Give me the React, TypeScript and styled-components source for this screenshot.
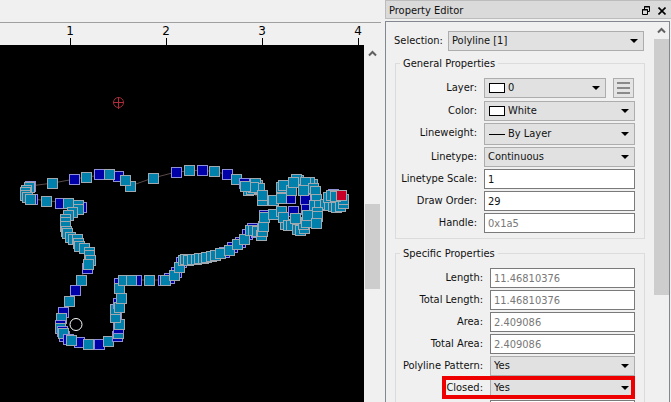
import React from "react";
import styled, { createGlobalStyle, css } from "styled-components";

const GlobalStyle = createGlobalStyle`
  * { box-sizing: border-box; }
  body { margin: 0; background: #f0f0f0; }
  body, input, select, button {
    font-family: "DejaVu Sans Condensed", Tahoma, "DejaVu Sans", sans-serif;
    font-size: 11px;
    line-height: 14px;
    color: #111;
  }
`;

const Window = styled.div`
  display: grid;
  grid-template-columns: minmax(0, 1fr) 286px;
  column-gap: 4px;
  height: 100vh;
  overflow: hidden;
`;

/* ---------- drawing area ---------- */

const DrawingArea = styled.main`
  display: flex;
  flex-direction: column;
  min-height: 0;
`;

const ToolbarGap = styled.div`
  height: 23px;
  border-bottom: 1px solid #a0a0a0;
  flex: none;
`;

const Ruler = styled.div`
  display: flex;
  height: 22px;
  padding-left: 22px;
  overflow: hidden;
  flex: none;
`;

const RulerMark = styled.div`
  display: flex;
  flex-direction: column;
  align-items: center;
  justify-content: space-between;
  flex: 0 0 96px;
  padding-top: 1px;
  font-family: "DejaVu Sans", Verdana, sans-serif;
  font-size: 12px;
  color: #000;

  &::after {
    content: "";
    width: 1px;
    height: 7px;
    background: #000;
  }
`;

const Viewport = styled.div`
  display: flex;
  flex: 1;
  min-height: 0;
`;

const Canvas = styled.div`
  flex: 1;
  min-width: 0;
  background: #000;
  overflow: hidden;

  svg { display: block; }
`;

const ScrollTrack = styled.div<{ $wide?: boolean }>`
  display: flex;
  flex-direction: column;
  align-items: center;
  flex: none;
  width: ${(p) => (p.$wide ? 17 : 15)}px;
  background: #f0f0f0;
`;

const ScrollButton = styled.button<{ $gap: number }>`
  display: grid;
  place-items: center;
  width: 15px;
  height: 17px;
  margin-bottom: ${(p) => p.$gap}px;
  padding: 0;
  border: 0;
  background: transparent;
  flex: none;
`;

const ScrollThumb = styled.div<{ $length: number }>`
  width: 15px;
  height: ${(p) => p.$length}px;
  background: #cdcdcd;
  flex: none;
`;

const ChevronUp = () => (
  <svg width="9" height="7" viewBox="0 0 9 7" aria-hidden="true">
    <path d="M1 5.5 4.5 2 8 5.5" fill="none" stroke="#606060" strokeWidth="2" />
  </svg>
);

type Node = [number, number, 0 | 1];

const nodes: Node[] = [
  [30, 186, 1], [29, 187, 0], [26, 190, 0], [25, 192, 0], [25, 195, 0], [27, 197, 0],
  [32, 199, 1], [30, 199, 0], [46, 201, 0], [60, 203, 1], [68, 203, 0],
  [81, 207, 1], [78, 205, 0], [78, 209, 0], [72, 212, 0], [68, 215, 0], [65, 219, 0],
  [65, 222, 0], [65, 226, 0], [66, 231, 0], [67, 233, 0], [70, 237, 0], [73, 239, 0],
  [77, 239, 0], [78, 243, 0], [79, 246, 0], [84, 248, 0], [89, 252, 0], [89, 255, 0],
  [90, 260, 0], [87, 268, 1], [88, 264, 0], [81, 280, 0], [75, 290, 1], [69, 301, 0], [63, 312, 1],
  [61, 318, 0], [60, 325, 1], [60, 328, 0], [62, 331, 1], [64, 336, 1], [63, 333, 0],
  [68, 339, 1], [79, 342, 1], [71, 340, 0], [99, 344, 1], [88, 344, 0], [108, 341, 0],
  [117, 336, 1], [118, 333, 0], [118, 328, 1], [119, 324, 0], [116, 314, 1], [115, 317, 0],
  [115, 309, 0], [118, 303, 1], [119, 307, 0], [121, 298, 0], [119, 283, 1], [119, 288, 0],
  [136, 280, 1], [123, 280, 0], [131, 280, 0], [149, 280, 0], [163, 280, 1], [169, 278, 1],
  [165, 280, 0], [176, 272, 1], [174, 275, 0], [181, 262, 1], [179, 267, 0], [183, 260, 0],
  [185, 259, 0], [188, 260, 0], [192, 259, 0], [196, 259, 0], [199, 258, 0], [203, 258, 0],
  [206, 257, 0], [211, 256, 0], [215, 255, 0], [224, 252, 1], [220, 253, 0], [232, 247, 1],
  [229, 250, 0], [240, 242, 1], [237, 244, 0], [247, 234, 1], [244, 239, 0], [252, 228, 1],
  [250, 230, 0], [256, 232, 1], [253, 230, 0], [257, 231, 0], [261, 235, 0], [262, 231, 0],
  [263, 226, 0], [264, 215, 1], [264, 217, 0], [273, 214, 0],
  [118, 176, 1], [130, 186, 0], [125, 180, 0], [99, 174, 1], [109, 174, 0],
  [86, 177, 0], [74, 179, 1], [52, 183, 0],
  [153, 178, 0], [176, 172, 1], [189, 170, 0], [202, 170, 1], [214, 171, 0], [227, 174, 1],
  [236, 179, 0], [244, 183, 1], [248, 190, 0], [251, 189, 0], [257, 185, 0], [255, 183, 0],
  [259, 188, 0], [253, 187, 0], [245, 186, 0], [262, 200, 0], [262, 195, 0],
  [290, 198, 1], [305, 199, 1], [293, 211, 1], [306, 209, 1],
  [273, 200, 0], [281, 192, 0], [281, 198, 0], [281, 187, 0], [283, 185, 0],
  [291, 190, 0], [298, 180, 0], [296, 179, 0], [293, 182, 0], [312, 184, 0], [309, 182, 0],
  [305, 182, 0], [313, 188, 0], [315, 191, 0], [303, 190, 0],
  [316, 199, 0], [314, 205, 0], [319, 205, 0], [325, 204, 0],
  [281, 211, 0], [285, 224, 0], [283, 217, 0], [288, 225, 0], [291, 225, 0], [297, 229, 0],
  [300, 230, 0], [304, 228, 0], [303, 224, 0], [306, 222, 0], [295, 218, 0], [307, 215, 0],
  [317, 212, 0], [317, 216, 0], [316, 223, 0],
  [329, 205, 0], [333, 206, 0], [336, 207, 0], [340, 206, 0], [343, 203, 0], [343, 199, 0],
  [328, 197, 0], [333, 194, 1], [331, 195, 0], [335, 196, 0],
];

const Drawing = () => (
  <svg width="364" height="357" viewBox="0 45 364 357" role="img" aria-label="Closed polyline with node handles">
    <path
      d="M30 186 53 183 75 179 87 177 109 174 119 176 130 186 153 178 176 172 202 170 227 174 262 200M32 199 68 203M88 264 61 318M123 280 166 280"
      fill="none" stroke="#5a4a4a"
    />
    {nodes.map(([x, y, mid], i) => (
      <rect
        key={i} x={x - 4.5} y={y - 4.5} width="10" height="10"
        fill={mid ? "#0000a8" : "#0080aa"} stroke={mid ? "#9090d8" : "#a0a8b0"}
      />
    ))}
    <rect x="336.5" y="190.5" width="10" height="10" fill="#c80028" stroke="#a0a8b0" />
    <path d="M118.500 97v12M113 102.500h11" stroke="#b02c3c" fill="none" />
    <circle cx="118.500" cy="102.500" r="5" fill="none" stroke="#a02c38" />
    <circle cx="76" cy="324.500" r="6" fill="none" stroke="#fff" />
  </svg>
);

/* ---------- property editor ---------- */

const Dock = styled.aside`
  display: flex;
  flex-direction: column;
  min-height: 0;
`;

const DockTitle = styled.header`
  display: flex;
  align-items: center;
  gap: 8px;
  height: 19px;
  padding: 2px 5px 0 3px;
  background: #dadada;
  border: solid #bcbcbc;
  border-width: 1px 0 1px 1px;
  flex: none;
  margin-bottom: 2px;
`;

const DockName = styled.h1`
  flex: 1;
  margin: 0;
  font-size: 11px;
  font-weight: 400;
`;

const TitleButton = styled.button`
  display: grid;
  place-items: center;
  width: 8px;
  height: 10px;
  padding: 0;
  border: 0;
  background: transparent;
`;

const DockBody = styled.div`
  display: flex;
  flex: 1;
  min-height: 0;
  margin-right: 1px;
  border: solid #828790;
  border-width: 1px 1px 0 1px;
  overflow: hidden;
`;

const Form = styled.form`
  flex: 1;
  min-width: 0;
  padding: 9px 9px 0 8px;
`;

const SelectionRow = styled.div`
  display: grid;
  grid-template-columns: 47px minmax(0, 1fr);
  column-gap: 7px;
  align-items: center;
  padding-right: 1px;
  margin-bottom: 12px;
`;

const Group = styled.fieldset<{ $labels: number }>`
  --labels: ${(p) => p.$labels}px;
  display: flex;
  flex-direction: column;
  gap: 2px;
  min-width: 0;
  margin: 0 0 14px 1px;
  padding: 14px 9px 5px 0;
  border: 1px solid #dcdcdc;
  position: relative;
`;

const GroupTitle = styled.legend`
  position: absolute;
  top: -7px;
  left: 4px;
  padding: 0 3px;
  background: #f0f0f0;
`;

const Row = styled.div<{ $height?: number; $marked?: boolean }>`
  display: grid;
  grid-template-columns: var(--labels) minmax(0, 1fr);
  column-gap: 7px;
  align-items: start;
  min-height: ${(p) => p.$height ?? 20}px;
  position: relative;

  ${(p) =>
    p.$marked &&
    css`
      &::after {
        content: "";
        position: absolute;
        inset: -2px 0 -1px 46px;
        border: 4px solid #ee0000;
        pointer-events: none;
      }
    `}
`;

const FieldLabel = styled.label`
  line-height: 20px;
  text-align: right;
  white-space: nowrap;
`;

const TextField = styled.input`
  width: 100%;
  height: 20px;
  padding: 0 3px;
  border: 1px solid #7a7a7a;
  border-radius: 0;
  background: #fff;

  &:read-only { color: #787878; }
`;

const FieldPair = styled.div`
  display: grid;
  grid-template-columns: minmax(0, 1fr) 21px;
  gap: 7px;
  padding-right: 1px;
`;

const Combo = styled.div<{ $height?: number }>`
  display: flex;
  align-items: center;
  gap: 3px;
  min-width: 0;
  height: ${(p) => p.$height ?? 20}px;
  padding: 0 5px 0 3px;
  border: 1px solid #adadad;
  background: #e1e1e1;

  select {
    appearance: none;
    flex: 1;
    min-width: 0;
    height: 100%;
    padding: 0;
    border: 0;
    background: transparent;
  }
`;

const Swatch = styled.span`
  width: 16px;
  height: 10px;
  margin-left: 1px;
  border: 1px solid #000;
  background: #fff;
`;

const LineSample = styled.span`
  width: 16px;
  height: 1px;
  margin-left: 1px;
  background: #000;
`;

const MenuButton = styled.button`
  display: grid;
  place-items: center;
  height: 20px;
  padding: 0;
  border: 1px solid #adadad;
  background: #e4e4e4;
`;

const Arrow = () => (
  <svg width="8" height="4" viewBox="0 0 8 4" aria-hidden="true">
    <path d="M0 0h8L4 4Z" fill="#000" />
  </svg>
);

interface FieldProps {
  id: string;
  label: string;
  value: string;
}

interface ComboFieldProps extends FieldProps {
  sample?: React.ReactNode;
  height?: number;
  marked?: boolean;
  action?: React.ReactNode;
}

const ComboBox = ({ id, value, sample, height }: Omit<ComboFieldProps, "label">) => (
  <Combo $height={height}>
    {sample}
    <select id={id} defaultValue={value}>
      <option>{value}</option>
    </select>
    <Arrow />
  </Combo>
);

const ComboField = ({ label, marked, action, ...box }: ComboFieldProps) => (
  <Row $height={action ? 21 : box.height} $marked={marked}>
    <FieldLabel htmlFor={box.id}>{label}</FieldLabel>
    {action ? (
      <FieldPair>
        <ComboBox {...box} />
        {action}
      </FieldPair>
    ) : (
      <ComboBox {...box} />
    )}
  </Row>
);

const InputField = ({ id, label, value, readOnly }: FieldProps & { readOnly?: boolean }) => (
  <Row>
    <FieldLabel htmlFor={id}>{label}</FieldLabel>
    <TextField id={id} defaultValue={value} readOnly={readOnly} />
  </Row>
);

export default function App() {
  return (
    <>
      <GlobalStyle />
      <Window>
        <DrawingArea>
          <ToolbarGap />
          <Ruler>
            {[1, 2, 3, 4].map((n) => (
              <RulerMark key={n}>{n}</RulerMark>
            ))}
          </Ruler>
          <Viewport>
            <Canvas>
              <Drawing />
            </Canvas>
            <ScrollTrack $wide>
              <ScrollButton $gap={142} aria-label="Scroll up">
                <ChevronUp />
              </ScrollButton>
              <ScrollThumb $length={85} />
            </ScrollTrack>
          </Viewport>
        </DrawingArea>

        <Dock>
          <DockTitle>
            <DockName>Property Editor</DockName>
            <TitleButton aria-label="Float">
              <svg width="8" height="9" viewBox="0 0 8 9" fill="none" stroke="#000">
                <path d="M2.500 3V.5h5v5H6M2 1h6" />
                <path d="M.5 3.500h5v5h-5ZM0 4h6" />
              </svg>
            </TitleButton>
            <TitleButton aria-label="Close">
              <svg width="8" height="8" viewBox="0 0 8 8" fill="none" stroke="#000" strokeWidth="1.600">
                <path d="M.5.5l7 7M7.500.5l-7 7" />
              </svg>
            </TitleButton>
          </DockTitle>
          <DockBody>
            <Form>
              <SelectionRow>
                <FieldLabel htmlFor="selection">Selection:</FieldLabel>
                <ComboBox id="selection" value="Polyline [1]" />
              </SelectionRow>

              <Group $labels={81}>
                <GroupTitle>General Properties</GroupTitle>
                <ComboField
                  id="layer" label="Layer:" value="0" sample={<Swatch />}
                  action={
                    <MenuButton type="button" aria-label="Layer menu">
                      <svg width="13" height="12" viewBox="0 0 13 12" stroke="#8a8a8a" strokeWidth="2">
                        <path d="M0 1h13M0 6h13M0 11h13" />
                      </svg>
                    </MenuButton>
                  }
                />
                <ComboField id="color" label="Color:" value="White" sample={<Swatch />} />
                <ComboField id="weight" label="Lineweight:" value="By Layer" sample={<LineSample />} height={22} />
                <ComboField id="linetype" label="Linetype:" value="Continuous" />
                <InputField id="scale" label="Linetype Scale:" value="1" />
                <InputField id="order" label="Draw Order:" value="29" />
                <InputField id="handle" label="Handle:" value="0x1a5" readOnly />
              </Group>

              <Group $labels={87}>
                <GroupTitle>Specific Properties</GroupTitle>
                <InputField id="length" label="Length:" value="11.46810376" readOnly />
                <InputField id="total-length" label="Total Length:" value="11.46810376" readOnly />
                <InputField id="area" label="Area:" value="2.409086" readOnly />
                <InputField id="total-area" label="Total Area:" value="2.409086" readOnly />
                <ComboField id="pattern" label="Polyline Pattern:" value="Yes" />
                <ComboField id="closed" label="Closed:" value="Yes" marked />
                <InputField id="width" label="" value="" />
              </Group>
            </Form>
            <ScrollTrack>
              <ScrollButton $gap={0} aria-label="Scroll up">
                <ChevronUp />
              </ScrollButton>
              <ScrollThumb $length={256} />
            </ScrollTrack>
          </DockBody>
        </Dock>
      </Window>
    </>
  );
}
